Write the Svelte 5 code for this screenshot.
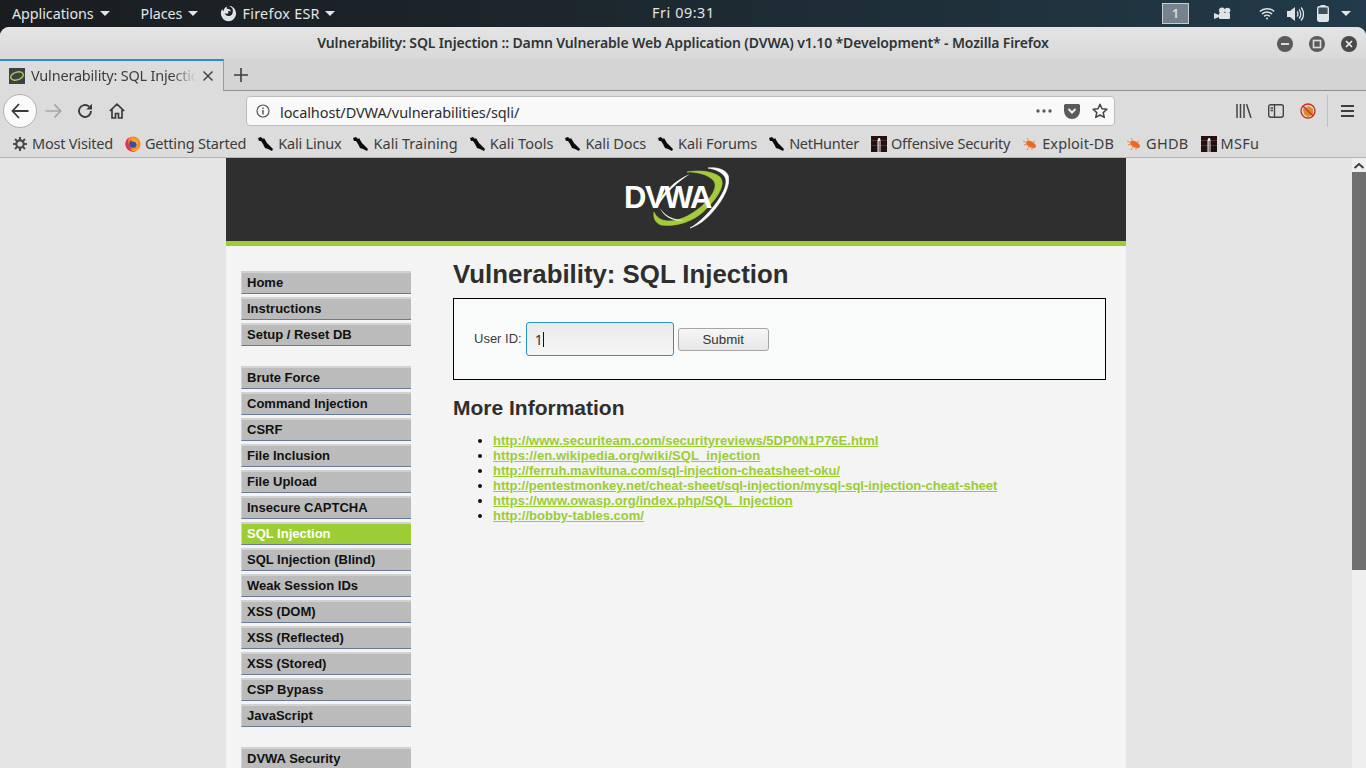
<script>
  const bookmarks = [
    ['Most Visited', 'gear', -0.2], ['Getting Started', 'fx', -0.2], ['Kali Linux', 'kali', -0.2], ['Kali Training', 'kali', 0.03],
    ['Kali Tools', 'kali', 0], ['Kali Docs', 'kali', -0.1], ['Kali Forums', 'kali', -0.1], ['NetHunter', 'kali', -0.3],
    ['Offensive Security', 'off', -0.2], ['Exploit-DB', 'bug', 0.1], ['GHDB', 'bug', 0.3], ['MSFu', 'off', 0.3]
  ];
  const menus = [
    ['Home', 'Instructions', 'Setup / Reset DB'],
    ['Brute Force', 'Command Injection', 'CSRF', 'File Inclusion', 'File Upload', 'Insecure CAPTCHA', 'SQL Injection', 'SQL Injection (Blind)', 'Weak Session IDs', 'XSS (DOM)', 'XSS (Reflected)', 'XSS (Stored)', 'CSP Bypass', 'JavaScript'],
    ['DVWA Security']
  ];
  const links = [
    ['http://www.securiteam.com/securityreviews/5DP0N1P76E.html', 0],
    ['https://en.wikipedia.org/wiki/SQL_injection', 0.07],
    ['http://ferruh.mavituna.com/sql-injection-cheatsheet-oku/', -0.02],
    ['http://pentestmonkey.net/cheat-sheet/sql-injection/mysql-sql-injection-cheat-sheet', -0.05],
    ['https://www.owasp.org/index.php/SQL_Injection', 0.045],
    ['http://bobby-tables.com/', 0]
  ];
</script>

<div class="screen">
  <header class="panel">
    <div class="panel-left">
      <span class="pitem apps">Applications <i class="caret"></i></span>
      <span class="pitem places">Places <i class="caret"></i></span>
      <span class="pitem ffx">
        <svg width="17" height="17" viewBox="0 0 16 16"><path d="M8 .8a7.200 7.200 0 1 1-7.200 7.200c0-1.600.5-3 1.400-4.200.1 1 .5 1.600 1 2 .3-2 1.500-3.600 3.400-4.400-.4 1-.3 1.700.2 2.200 1.800.1 3.300 1 3.700 2.600-.9-.7-2-.8-2.900-.4.500.6.500 1.500-.2 2.100-.8.7-2 .5-2.800-.3.300 1.700 1.800 2.900 3.600 2.800 2.300-.1 4-2 3.800-4.300C12.800 3.900 10.600 1.800 8 .8z" fill="#dfe3e4"/></svg>
        Firefox ESR <i class="caret"></i>
      </span>
    </div>
    <div class="clock">Fri 09:31</div>
    <div class="panel-right">
      <span class="ws">1</span>
      <svg class="cam" width="17" height="13" viewBox="0 0 17 13"><circle cx="8" cy="3.500" r="3" fill="#dfe3e4"/><circle cx="13.500" cy="3.500" r="2.800" fill="#dfe3e4"/><rect x="5" y="6" width="11" height="6" rx="1" fill="#dfe3e4"/><path d="M0 6l5 2v2l-5 2z" fill="#dfe3e4"/></svg>
      <svg class="wifi" width="16" height="13" viewBox="0 0 16 13" fill="none" stroke="#dfe3e4" stroke-width="1.500"><path d="M.8 4.500a10.500 10.500 0 0 1 14.400 0M3 7a7.200 7.200 0 0 1 10 0M5.200 9.400a4 4 0 0 1 5.600 0"/><circle cx="8" cy="11.500" r="1" fill="#dfe3e4" stroke="none"/></svg>
      <svg class="vol" width="17" height="16" viewBox="0 0 17 16" fill="none" stroke="#dfe3e4" stroke-width="1.300"><path d="M0 5h3l5-4v14l-5-4H0z" fill="#dfe3e4" stroke="none"/><path d="M10 5.500a3.500 3.500 0 0 1 0 5M12 3.500a6.500 6.500 0 0 1 0 9M14 1.500a9.500 9.500 0 0 1 0 13"/></svg>
      <svg class="bat" width="12" height="17" viewBox="0 0 12 17"><rect x="3.500" y="0" width="5" height="2" fill="#dfe3e4"/><rect x=".7" y="1.700" width="10.600" height="14.600" rx="1.500" fill="#42505a" stroke="#dfe3e4" stroke-width="1.400"/><rect x="1" y="9" width="10" height="7" fill="#dfe3e4"/></svg>
      <i class="caret last"></i>
    </div>
  </header>

  <div class="window">
    <div class="titlebar">
      <span class="title">Vulnerability: SQL Injection :: Damn Vulnerable Web Application (DVWA) v1.10 *Development* - Mozilla Firefox</span>
      <div class="wbtns">
        <span class="wb"><svg width="16" height="16" viewBox="0 0 16 16"><circle cx="8" cy="8" r="8" fill="#5a5a5a"/><rect x="4" y="7" width="8" height="2" fill="#dcdcdc"/></svg></span>
        <span class="wb"><svg width="16" height="16" viewBox="0 0 16 16"><circle cx="8" cy="8" r="8" fill="#5a5a5a"/><rect x="4.500" y="4.500" width="7" height="7" fill="none" stroke="#dcdcdc" stroke-width="1.600"/></svg></span>
        <span class="wb"><svg width="16" height="16" viewBox="0 0 16 16"><circle cx="8" cy="8" r="8" fill="#4a4a4a"/><path d="M5 5l6 6M11 5l-6 6" stroke="#f0f0f0" stroke-width="1.700"/></svg></span>
      </div>
    </div>

    <div class="tabrow">
      <div class="tab">
        <svg class="fav" width="16" height="16" viewBox="0 0 16 16"><rect width="16" height="16" fill="#3b4144"/><ellipse cx="8" cy="8" rx="6.500" ry="3.800" transform="rotate(-18 8 8)" fill="none" stroke="#a6c84c" stroke-width="1.500"/></svg>
        <span class="tabtext">Vulnerability: SQL Injection</span>
        <svg class="tabx" width="12" height="12" viewBox="0 0 12 12"><path d="M1.500 1.500l9 9M10.500 1.500l-9 9" stroke="#444" stroke-width="1.500"/></svg>
      </div>
      <svg class="plus" width="14" height="14" viewBox="0 0 14 14"><path d="M7 0v14M0 7h14" stroke="#3d3d3d" stroke-width="1.600"/></svg>
    </div>

    <div class="navbar">
      <span class="back"><svg width="18" height="16" viewBox="0 0 18 16" fill="none" stroke="#3a3a3a" stroke-width="1.800"><path d="M8 1L1.500 8 8 15M2 8h15.500"/></svg></span>
      <svg class="fwd" width="17" height="16" viewBox="0 0 18 16" fill="none" stroke="#a6a6a6" stroke-width="1.800"><path d="M10 1l6.500 7L10 15M16 8H.5"/></svg>
      <svg class="reload" width="16" height="16" viewBox="0 0 16 16" fill="none" stroke="#3a3a3a" stroke-width="1.900"><path d="M14 8a6 6 0 1 1-2-4.500"/><path d="M15 .8v5.700H9.300z" fill="#3a3a3a" stroke="none"/></svg>
      <svg class="home" width="16" height="16" viewBox="0 0 16 16" fill="none" stroke="#3a3a3a" stroke-width="1.700"><path d="M.8 8L8 1.200 15.200 8M3 6.500V15h3.500v-4.500h3V15H13V6.500"/></svg>
      <div class="url">
        <svg class="info" width="14" height="14" viewBox="0 0 14 14"><circle cx="7" cy="7" r="6" fill="none" stroke="#555" stroke-width="1.200"/><rect x="6.300" y="6" width="1.400" height="4.500" fill="#555"/><rect x="6.300" y="3.500" width="1.400" height="1.500" fill="#555"/></svg>
        <span class="urltext">localhost/DVWA/vulnerabilities/sqli/</span>
        <svg class="dots" width="16" height="4" viewBox="0 0 16 4" fill="#5a5a5a"><circle cx="2" cy="2" r="1.700"/><circle cx="8" cy="2" r="1.700"/><circle cx="14" cy="2" r="1.700"/></svg>
        <svg class="pocket" width="16" height="15" viewBox="0 0 16 15"><path d="M1.500 0h13A1.500 1.500 0 0 1 16 1.500V7a8 8 0 0 1-16 0V1.500A1.500 1.500 0 0 1 1.500 0z" fill="#5a5a5a"/><path d="M4.500 5L8 8.500 11.500 5" fill="none" stroke="#eee" stroke-width="2"/></svg>
        <svg class="star" width="16" height="16" viewBox="0 0 16 16"><path d="M8 1.300l2 4.500 4.900.5-3.700 3.300 1.100 4.800L8 12l-4.300 2.400 1.100-4.800L1.100 6.300 6 5.800z" fill="none" stroke="#444" stroke-width="1.500" stroke-linejoin="round"/></svg>
      </div>
      <div class="tools">
        <svg width="16" height="14" viewBox="0 0 16 14" stroke="#444" stroke-width="1.500" fill="none"><path d="M1 0v14M4.500 0v14M8 0v14M10.500 0l4.500 14"/></svg>
        <svg class="side" width="16" height="14" viewBox="0 0 16 14" fill="none" stroke="#444" stroke-width="1.400"><rect x=".7" y=".7" width="14.600" height="12.600" rx="2"/><path d="M6.500 1v12M2.500 4h2.500M2.500 6.500h2.500"/></svg>
        <svg class="noscr" width="16" height="16" viewBox="0 0 16 16"><path d="M3 6l6-3 4 3v5l-5 3-4-3z" fill="#d98a27"/><circle cx="8" cy="8" r="7" fill="none" stroke="#d22f22" stroke-width="1.400"/><path d="M3 3l10 10" stroke="#d22f22" stroke-width="1.400"/></svg>
        <span class="sep"></span>
        <svg class="ham" width="13" height="12" viewBox="0 0 13 12" fill="#3d3d3d"><rect width="13" height="2"/><rect y="5" width="13" height="2"/><rect y="10" width="13" height="2"/></svg>
      </div>
    </div>

    <div class="bookmarks">
      {#each bookmarks as [label, icon, ls]}
        <span class="bm">
          {#if icon === 'gear'}
            <svg width="16" height="16" viewBox="-1 -1 16 16"><circle cx="7" cy="7" r="3.700" fill="none" stroke="#4a4a4a" stroke-width="2.200"/><path d="M7 0v3M7 11v3M0 7h3M11 7h3M2 2l2.200 2.200M9.800 9.800L12 12M12 2L9.800 4.200M4.200 9.800L2 12" stroke="#4a4a4a" stroke-width="2"/></svg>
          {:else if icon === 'fx'}
            <svg width="16" height="16" viewBox="0 0 16 16"><circle cx="8" cy="8" r="7.600" fill="#f98a1c"/><path d="M.4 8A7.600 7.600 0 0 1 4 1.500C3 4 3 7 4.500 10c1.500 3 4 4.500 7 4.800A7.600 7.600 0 0 1 .4 8z" fill="#e2304e"/><circle cx="8.300" cy="7.800" r="4" fill="#2f4fa8"/><path d="M6.500 3c3-1.200 6.500.5 7 4 .4 3-1.800 5.500-4.500 5.300 1.800-.5 2.800-2 2.500-3.800C11.200 6.500 9 5 6.500 5.700z" fill="#fca22a"/><path d="M4.500 12.500c3 2 6.500 1.500 9-1-1.500 3-4 3.800-6 3.500z" fill="#fdc52f"/></svg>
          {:else if icon === 'kali'}
            <svg width="16" height="16" viewBox="0 0 16 16"><path d="M0 2l3-1 2 2 1-1 3 5 2 2 4 4-1 2-4-2-3-1-2-4-2-3H1z" fill="#0c0c0c"/></svg>
          {:else if icon === 'off'}
            <svg width="16" height="16" viewBox="0 0 16 16"><rect width="16" height="16" fill="#241010"/><rect y="4" width="16" height="1" fill="#5a2a2a"/><rect y="9" width="16" height="1" fill="#5a2a2a"/><path d="M6.500 16V4l1-2h1.500l.5 2V16H8.500V5H7.700V16z" fill="#eee"/></svg>
          {:else}
            <svg width="16" height="16" viewBox="0 0 16 16"><ellipse cx="9" cy="8.500" rx="5.500" ry="3" transform="rotate(30 9 8.500)" fill="#ee6a1c"/><path d="M1 5l4 2M5 2l2 3M2 9l3-1M5 14l2-3M10 14l0-3M13 5l-2 1" stroke="#f08a4a" stroke-width="1"/></svg>
          {/if}
          <span class="bmtext" style="letter-spacing: {ls}px">{label}</span>
        </span>
      {/each}
    </div>

    <div class="viewport">
      <div class="page">
        <div class="banner">
          <div class="logo">
            <svg width="106" height="62" viewBox="0 0 106 62">
              <path d="M85 1C93 0 102 2 105 8C108 16 102 30 92 42C84 52 76 58 67 61C76 56 86 46 94 35C101 25 105 16 102 10C99 5 92 2 85 1Z" fill="#fff" stroke="#fff" stroke-width=".6"/>
              <path d="M64 5C75 3 90 4 97 10C103 17 96 30 80 45C68 56 50 60 38 58C32 56 30 50 31 45C33 50 38 54 46 54C58 54 72 46 82 36C91 27 95 18 90 13C84 7 74 5 64 5Z" fill="#a4cc3a" stroke="#a4cc3a" stroke-width=".6"/>
              <path d="M33 39C39 26 52 13 67 7C54 15 42 27 35 39Z" fill="#fff"/>
              <path d="M37 41C42 49 50 53 61 53C50 55 41 50 37 41Z" fill="#fff"/>
              <text x="1" y="41" class="logotext">DVWA</text>
            </svg>
          </div>
        </div>
        <div class="columns">
          <nav class="menu">
            {#each menus as group}
              <ul>
                {#each group as item}
                  <li class:on={item === 'SQL Injection'}>{item}</li>
                {/each}
              </ul>
            {/each}
          </nav>
          <main class="body">
            <h1>Vulnerability: SQL Injection</h1>
            <div class="box">
              <span class="lbl">User ID:</span>
              <span class="input"><span class="val">1</span><i class="cursor"></i></span>
              <span class="submit">Submit</span>
            </div>
            <h2>More Information</h2>
            <ul class="links">
              {#each links as [l, ls]}
                <li><span class="lnk" style="letter-spacing: {ls}px">{l}</span></li>
              {/each}
            </ul>
          </main>
        </div>
      </div>
      <div class="scroll">
        <svg class="arrow" width="12" height="7" viewBox="0 0 12 7" fill="none" stroke="#3d3d3d" stroke-width="2"><path d="M1.500 6L6 2l4.500 4"/></svg>
        <div class="thumb"></div>
      </div>
    </div>
  </div>
</div>

<style>
  :global(body) { margin: 0; background: #000; overflow: hidden; }
  .screen {
    width: 1366px; height: 768px; overflow: hidden; display: flex; flex-direction: column;
    font-family: "Noto Sans", sans-serif;
    background: linear-gradient(90deg, #1a1d20 0%, #1c262c 40%, #223a49 100%);
  }
  .panel { height: 27px; flex: none; display: flex; align-items: center; position: relative; color: #e3e6e7; font-size: 14.300px; letter-spacing: -0.05px; }
  .panel-left { display: flex; align-items: center; }
  .pitem { display: flex; align-items: center; gap: 6px; white-space: nowrap; }
  .apps { margin-left: 12px; }
  .places { margin-left: 31px; }
  .ffx { margin-left: 22px; gap: 5px; letter-spacing: 0.3px; }
  .caret { display: inline-block; width: 0; height: 0; border-left: 5px solid transparent; border-right: 5px solid transparent; border-top: 5px solid #e3e6e7; }
  .clock { position: absolute; left: 652px; top: 3px; letter-spacing: 0.6px; }
  .panel-right { margin-left: auto; display: flex; align-items: center; }
  .ws { width: 27px; height: 21px; box-sizing: border-box; border: 1px solid #c7ccd0; background: #76828c; color: #d9dcde; text-align: center; font-size: 13px; line-height: 19px; font-weight: 600; }
  .cam { margin-left: 25px; }
  .wifi { margin-left: 28px; }
  .vol { margin-left: 12px; }
  .bat { margin-left: 13px; }
  .caret.last { margin: 0 15px 0 12px; }

  .window { flex: 1; min-height: 0; display: flex; flex-direction: column; border-radius: 9px 9px 0 0; overflow: hidden; background: #d4d4d4; }
  .titlebar { height: 32px; flex: none; display: flex; align-items: center; justify-content: center; position: relative; background: linear-gradient(#e4e4e4, #d9d9d9); }
  .title { font-size: 14px; font-weight: 600; color: #2f3436; white-space: nowrap; letter-spacing: -0.14px; margin-top: -2px; }
  .wbtns { position: absolute; right: 9px; top: 8px; display: flex; gap: 16px; }
  .wb { display: block; width: 16px; height: 16px; }

  .tabrow { height: 32px; flex: none; display: flex; align-items: center; background: #d4d4d4; border-bottom: 1px solid #8f8f8f; box-sizing: border-box; }
  .tab { width: 224px; height: 32px; box-sizing: border-box; border-top: 2px solid #2a8cc8; border-right: 1px solid #9c9c9c; background: #dcdcdc; display: flex; align-items: center; padding: 0 9px 0 9px; gap: 6px; }
  .fav { flex: none; }
  .tabtext { flex: 1; min-width: 0; overflow: hidden; white-space: nowrap; font-size: 14.500px; letter-spacing: -0.2px; color: #3c3c3c; margin-top: -2px; -webkit-mask-image: linear-gradient(90deg, #000 85%, transparent); mask-image: linear-gradient(90deg, #000 85%, transparent); }
  .tabx { flex: none; }
  .plus { margin-left: 10px; }

  .navbar { height: 40px; flex: none; display: flex; align-items: center; background: #dcdcdc; position: relative; }
  .back { width: 34px; height: 34px; box-sizing: border-box; margin-left: 3px; border: 1px solid #b0b0b0; border-radius: 50%; background: #fafafa; display: flex; align-items: center; justify-content: center; }
  .fwd { margin-left: 8px; }
  .reload { margin-left: 15px; }
  .home { margin-left: 16px; }
  .url { margin-left: 121px; width: 869px; height: 30px; box-sizing: border-box; border: 1px solid #bcbcbc; border-radius: 4px; background: #f9f9f9; display: flex; align-items: center; padding: 0 6px 0 9px; }
  .urltext { margin-left: 10px; font-size: 14.500px; letter-spacing: -0.1px; color: #2c2c2c; flex: 1; padding-top: 1px; }
  .pocket { margin-left: 12px; }
  .star { margin-left: 12px; }
  .tools { margin-left: auto; display: flex; align-items: center; padding-right: 12px; }
  .side { margin-left: 16px; }
  .noscr { margin-left: 16px; }
  .sep { width: 1px; height: 32px; background: #c0c0c0; margin-left: 11px; }
  .ham { margin-left: 13px; }

  .bookmarks { height: 27px; flex: none; display: flex; align-items: center; background: #dcdcdc; border-bottom: 1px solid #b4b4b4; box-sizing: border-box; padding-left: 12px; gap: 12px; }
  .bm { display: flex; align-items: center; gap: 4px; white-space: nowrap; font-size: 14.500px; color: #3c3c3c; }
  .bmtext { margin-top: -3px; }
  .bm svg { flex: none; }

  .viewport { flex: 1; min-height: 0; display: flex; background: #e5e5e5; overflow: hidden; }
  .page { width: 900px; margin-left: 226px; background: #f4f4f4; font-family: "Liberation Sans", sans-serif; color: #2f2f2f; flex: none; }
  .banner { height: 83px; background: #2f2f2f; border-bottom: 5px solid #9fcb34; display: flex; justify-content: center; }
  .logo { margin-top: 9px; margin-left: -1px; height: 62px; }
  .logotext { font-family: "Liberation Sans", sans-serif; font-weight: 700; font-size: 31px; letter-spacing: -1.500px; fill: #fff; }
  .columns { display: flex; }
  .menu { width: 170px; margin-left: 15px; padding-top: 25px; }
  .menu ul { list-style: none; margin: 0 0 20px; padding: 0; }
  .menu li { height: 23px; box-sizing: border-box; margin-bottom: 3px; padding-left: 5px; border-top: 2px solid #d2d2d2; border-left: 1px solid #d2d2d2; border-bottom: 1px solid #6a7a94; background: #bbb; color: #111; font-size: 13px; font-weight: 700; line-height: 20px; }
  .menu li.on { background: #9dcd35; color: #fff; }
  .body { margin-left: 42px; width: 653px; }
  h1 { margin: 0; padding-top: 12px; font-size: 25.800px; line-height: 32px; font-weight: 700; color: #2e2e2e; }
  .box { margin-top: 8px; height: 82px; box-sizing: border-box; border: 1px solid #000; background: #f9fbfa; display: flex; align-items: center; padding-left: 20px; position: relative; }
  .lbl { font-size: 13px; color: #3c3c3c; margin-top: -2px; }
  .input { margin-left: 4px; width: 148px; height: 34px; box-sizing: border-box; border: 1px solid #2a90cf; border-radius: 3px; background: linear-gradient(#e9e9e9, #f6f6f6); display: flex; align-items: center; padding-left: 8px; font-size: 14px; color: #333; font-family: "Noto Sans", sans-serif; }
  .cursor { width: 1px; height: 15px; background: #111; }
  .submit { margin-left: 4px; margin-top: 1px; width: 91px; height: 23px; box-sizing: border-box; border: 1px solid #a5a5a5; border-radius: 3px; background: linear-gradient(#f6f6f6, #e6e6e6); text-align: center; font-size: 13.300px; line-height: 21px; color: #333; }
  h2 { margin: 16px 0 0; font-size: 21px; line-height: 24px; font-weight: 700; color: #2e2e2e; }
  .links { margin: 13px 0 0; padding-left: 40px; font-size: 13px; line-height: 15px; color: #111; }
  .lnk { color: #9acd32; font-weight: 700; text-decoration: underline; }

  .scroll { margin-left: auto; width: 14px; flex: none; background: #efefef; position: relative; display: flex; flex-direction: column; }
  .arrow { position: absolute; left: 1px; top: 4px; }
  .thumb { margin-top: 14px; height: 398px; background: #6f6f6f; }
</style>
